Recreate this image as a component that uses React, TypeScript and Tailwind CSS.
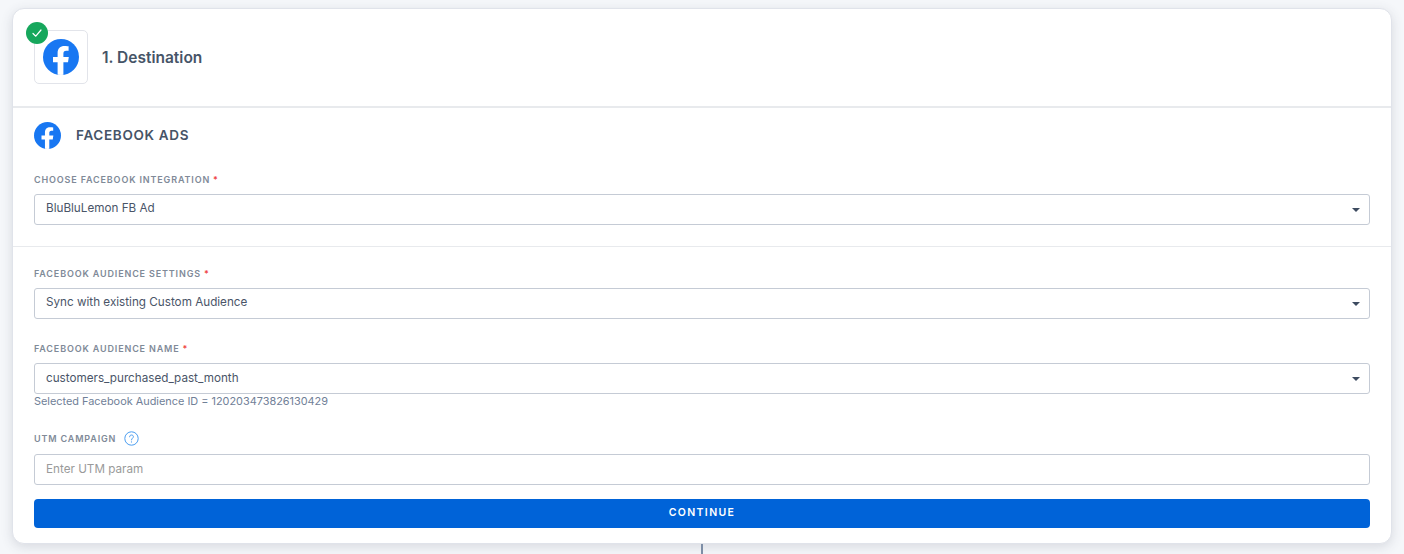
import React from "react";

function Fb({ size }: { size: number }) {
  return (
    <svg width={size} height={size} viewBox="0 0 36 36" className="block shrink-0">
      <defs>
        <clipPath id={`c${size}`}><circle cx="18" cy="18" r="18" /></clipPath>
      </defs>
      <circle cx="18" cy="18" r="18" fill="#1877f2" />
      <path clipPath={`url(#c${size})`} fill="#fff" d="M25 23.2 25.8 18H20.4V14.6C20.4 13.1 21.1 11.8 23.3 11.8H25.6V7.3C25.6 7.3 23.5 7 21.5 7 17.3 7 14.6 9.5 14.6 14.1V18H10V23.2H14.6V36H20.4V23.2Z" />
    </svg>
  );
}

function Label({ text, req }: { text: string; req?: boolean }) {
  return (
    <div className="text-[9px] leading-[12px] font-semibold tracking-[0.85px] text-[#808a98] uppercase">
      {text}
      {req && <span className="text-[#ef4444] ml-[3px]">*</span>}
    </div>
  );
}

function Select({ value, shift }: { value: string; shift?: boolean }) {
  return (
    <div className="h-[31px] flex items-center justify-between pl-[11px] pr-[9px] border border-[#c5cbd5] rounded-[3px] bg-white text-[11.7px] text-[#4a5568]">
      <span className={shift ? "mt-0" : "-mt-[2px]"}>{value}</span>
      <span className="w-0 h-0 border-x-[4px] border-x-transparent border-t-[4px] border-t-[#3d4b60]" />
    </div>
  );
}

export default function App() {
  return (
    <div className="h-[554px] overflow-hidden bg-[#f5f7fa] pt-[8px] px-[12px] [font-family:Inter,sans-serif]">
      <div className="relative w-[1380px] h-[536px] bg-white border border-[#e0e3ea] rounded-[12px] shadow-[0_3px_12px_rgba(60,70,90,0.16)]">
        <div className="h-[99px] pl-[21px] flex items-center gap-[14px] border-b-2 border-[#e8eaed]">
          <div className="relative w-[54px] h-[54px] -mt-[1px] border border-[#e2e4ea] rounded-[5px] flex items-center justify-center">
            <Fb size={36} />
            <div className="absolute -left-[9px] -top-[9px] w-[22px] h-[22px] rounded-full bg-[#16a75c] flex items-center justify-center">
              <svg width="12" height="12" viewBox="0 0 12 12" fill="none" stroke="#fff" strokeWidth="1.2" strokeLinecap="round" strokeLinejoin="round">
                <path d="M2 6.5 4.8 9.2 10 3" />
              </svg>
            </div>
          </div>
          <div className="text-[15.5px] font-semibold text-[#465467] mt-[1px]">1. Destination</div>
        </div>

        <div className="px-[21px] pt-[14px] border-b border-[#e8eaed] h-[139px]">
          <div className="flex items-center gap-[15px]">
            <Fb size={27} />
            <div className="text-[13.5px] font-semibold tracking-[0.05em] text-[#465467]">FACEBOOK ADS</div>
          </div>
          <div className="mt-[25px]"><Label text="Choose Facebook Integration" req /></div>
          <div className="mt-[8px]"><Select value="BluBluLemon FB Ad" /></div>
        </div>

        <div className="px-[21px] pt-[21px]">
          <Label text="Facebook Audience Settings" req />
          <div className="mt-[8px]"><Select value="Sync with existing Custom Audience" /></div>
          <div className="mt-[24px]"><Label text="Facebook Audience Name" req /></div>
          <div className="mt-[8px]"><Select value="customers_purchased_past_month" shift /></div>
          <div className="text-[10.9px] leading-[14px] text-[#708097]">Selected Facebook Audience ID = 120203473826130429</div>
          <div className="mt-[23px] flex items-center gap-[8px]">
            <Label text="UTM Campaign" />
            <svg width="15" height="15" viewBox="0 0 15 15" fill="none" className="block">
              <circle cx="7.5" cy="7.5" r="6.7" stroke="#4a9df0" strokeWidth="1" />
              <path d="M5.6 5.8C5.6 4.6 6.5 4 7.5 4 8.6 4 9.4 4.7 9.4 5.7 9.4 7.1 7.5 7.2 7.5 8.9" stroke="#4a9df0" strokeWidth="1" strokeLinecap="round" />
              <circle cx="7.5" cy="10.9" r="0.6" fill="#4a9df0" />
            </svg>
          </div>
          <div className="mt-[8px] h-[31px] flex items-center pl-[11px] border border-[#c5cbd5] rounded-[3px] text-[11.7px] text-[#9a9a9a]"><span>Enter UTM param</span></div>
          <div className="mt-[14px] h-[29px] flex items-center justify-center rounded-[4px] bg-[#0063d8] text-white text-[10.5px] font-semibold tracking-[0.13em]"><span className="-mt-[2px]">CONTINUE</span></div>
        </div>

        <div className="absolute left-[688px] top-[535px] w-[2px] h-[12px] bg-[#7d8ea6]" />
      </div>
    </div>
  );
}
